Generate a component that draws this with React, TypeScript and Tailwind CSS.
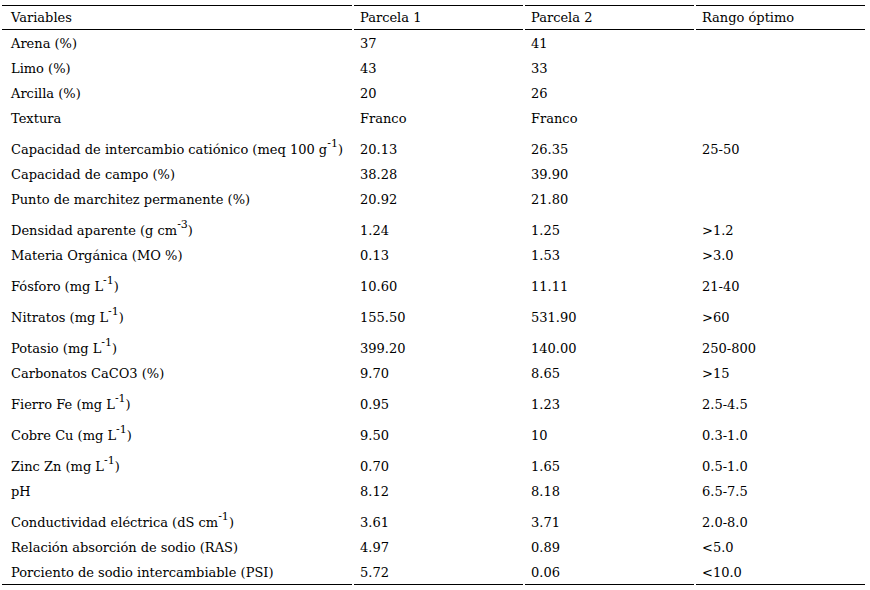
import React from 'react';

type Row = {
  label: React.ReactNode;
  p1: string;
  p2: string;
  rango: string;
  tall?: boolean;
};

const Sup: React.FC<{ children: React.ReactNode }> = ({ children }) => (
  <sup className="text-[11px] -top-[7px]">{children}</sup>
);

const rows: Row[] = [
  { label: 'Arena (%)', p1: '37', p2: '41', rango: '' },
  { label: 'Limo (%)', p1: '43', p2: '33', rango: '' },
  { label: 'Arcilla (%)', p1: '20', p2: '26', rango: '' },
  { label: 'Textura', p1: 'Franco', p2: 'Franco', rango: '' },
  {
    label: <>Capacidad de intercambio catiónico (meq 100 g<Sup>-1</Sup>)</>,
    p1: '20.13',
    p2: '26.35',
    rango: '25-50',
    tall: true,
  },
  { label: 'Capacidad de campo (%)', p1: '38.28', p2: '39.90', rango: '' },
  { label: 'Punto de marchitez permanente (%)', p1: '20.92', p2: '21.80', rango: '' },
  { label: <>Densidad aparente (g cm<Sup>-3</Sup>)</>, p1: '1.24', p2: '1.25', rango: '>1.2', tall: true },
  { label: 'Materia Orgánica (MO %)', p1: '0.13', p2: '1.53', rango: '>3.0' },
  { label: <>Fósforo (mg L<Sup>-1</Sup>)</>, p1: '10.60', p2: '11.11', rango: '21-40', tall: true },
  { label: <>Nitratos (mg L<Sup>-1</Sup>)</>, p1: '155.50', p2: '531.90', rango: '>60', tall: true },
  { label: <>Potasio (mg L<Sup>-1</Sup>)</>, p1: '399.20', p2: '140.00', rango: '250-800', tall: true },
  { label: 'Carbonatos CaCO3 (%)', p1: '9.70', p2: '8.65', rango: '>15' },
  { label: <>Fierro Fe (mg L<Sup>-1</Sup>)</>, p1: '0.95', p2: '1.23', rango: '2.5-4.5', tall: true },
  { label: <>Cobre Cu (mg L<Sup>-1</Sup>)</>, p1: '9.50', p2: '10', rango: '0.3-1.0', tall: true },
  { label: <>Zinc Zn (mg L<Sup>-1</Sup>)</>, p1: '0.70', p2: '1.65', rango: '0.5-1.0', tall: true },
  { label: 'pH', p1: '8.12', p2: '8.18', rango: '6.5-7.5' },
  {
    label: <>Conductividad eléctrica (dS cm<Sup>-1</Sup>)</>,
    p1: '3.61',
    p2: '3.71',
    rango: '2.0-8.0',
    tall: true,
  },
  { label: 'Relación absorción de sodio (RAS)', p1: '4.97', p2: '0.89', rango: '<5.0' },
  { label: 'Porciento de sodio intercambiable (PSI)', p1: '5.72', p2: '0.06', rango: '<10.0' },
];

export default function App() {
  return (
    <div className="w-[870px] h-[590px] bg-white text-black font-['DejaVu_Serif',serif] text-[13px] pt-[3px]">
      <table className="table-fixed border-separate border-spacing-[2px] w-[867px]">
        <colgroup>
          <col className="w-[350px]" />
          <col className="w-[169px]" />
          <col className="w-[169px]" />
          <col className="w-[169px]" />
        </colgroup>
        <thead>
          <tr className="h-[25px]">
            <th className="border-y border-black font-normal text-left align-bottom leading-[23px] pl-[9px] p-0">Variables</th>
            <th className="border-y border-black font-normal text-left align-bottom leading-[23px] pl-[6px] p-0">Parcela 1</th>
            <th className="border-y border-black font-normal text-left align-bottom leading-[23px] pl-[6px] p-0">Parcela 2</th>
            <th className="border-y border-black font-normal text-left align-bottom leading-[23px] pl-[6px] p-0">Rango óptimo</th>
          </tr>
        </thead>
        <tbody>
          {rows.map((r, i) => {
            const last = i === rows.length - 1;
            const b = last ? 'border-b border-black' : '';
            return (
              <tr key={i} className={r.tall ? 'h-[29px]' : 'h-[23px]'}>
                <td className={`p-0 pl-[9px] align-bottom leading-[23px] whitespace-nowrap ${b}`}>{r.label}</td>
                <td className={`p-0 pl-[6px] align-bottom leading-[23px] ${b}`}>{r.p1}</td>
                <td className={`p-0 pl-[6px] align-bottom leading-[23px] ${b}`}>{r.p2}</td>
                <td className={`p-0 pl-[6px] align-bottom leading-[23px] ${b}`}>{r.rango}</td>
              </tr>
            );
          })}
        </tbody>
      </table>
    </div>
  );
}
